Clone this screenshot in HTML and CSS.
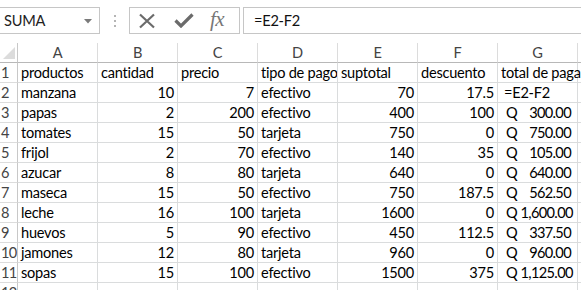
FILE: index.html
```html
<!DOCTYPE html>
<html>
<head>
<meta charset="utf-8">
<link rel="stylesheet" href="styles.css">
</head>
<body>
<div class="toolbar">
  <div class="namebox"><span class="nb-text">SUMA</span>
    <svg class="nb-arrow" width="8" height="5" viewBox="0 0 8 5"><path d="M0 0H8L4 4.5Z" fill="#7a7a7a"/></svg>
  </div>
  <div class="dots">
    <svg width="4" height="14" viewBox="0 0 4 14"><rect x="1" y="1" width="2" height="2" fill="#b5b5b5"/><rect x="1" y="6" width="2" height="2" fill="#b5b5b5"/><rect x="1" y="11" width="2" height="2" fill="#b5b5b5"/></svg>
  </div>
  <div class="fxbox">
    <svg class="ic-x" width="18" height="16" viewBox="0 0 18 16"><path d="M2 1.5L16 14.5M16 1.5L2 14.5" stroke="#6b6b6b" stroke-width="2.2" fill="none"/></svg>
    <svg class="ic-check" width="20" height="15" viewBox="0 0 20 15"><path d="M1.5 7.5L7 13L18.5 1.5" stroke="#6b6b6b" stroke-width="3.2" fill="none"/></svg>
    <span class="fx">fx</span>
  </div>
  <div class="formula">=E2-F2</div>
</div>

<div class="sheet">
  <div class="corner"><svg width="12" height="12" viewBox="0 0 12 12"><path d="M12 0V12H0Z" fill="#dcdcdc"/></svg></div>
  <div class="ch">A</div><div class="ch">B</div><div class="ch">C</div><div class="ch">D</div><div class="ch">E</div><div class="ch">F</div><div class="ch">G</div><div class="ch last"></div>

  <div class="rh">1</div><div class="c">productos</div><div class="c">cantidad</div><div class="c">precio</div><div class="c">tipo de pago</div><div class="c">suptotal</div><div class="c">descuento</div><div class="c over">total de paga</div><div class="c last"></div>

  <div class="rh">2</div><div class="c">manzana</div><div class="c n">10</div><div class="c n">7</div><div class="c">efectivo</div><div class="c n">70</div><div class="c n">17.5</div><div class="c edit">=E2-F2</div><div class="c last"></div>

  <div class="rh">3</div><div class="c">papas</div><div class="c n">2</div><div class="c n">200</div><div class="c">efectivo</div><div class="c n">400</div><div class="c n">100</div><div class="c acc"><span>Q</span><span class="amt">300.00</span></div><div class="c last"></div>

  <div class="rh">4</div><div class="c">tomates</div><div class="c n">15</div><div class="c n">50</div><div class="c">tarjeta</div><div class="c n">750</div><div class="c n">0</div><div class="c acc"><span>Q</span><span class="amt">750.00</span></div><div class="c last"></div>

  <div class="rh">5</div><div class="c">frijol</div><div class="c n">2</div><div class="c n">70</div><div class="c">efectivo</div><div class="c n">140</div><div class="c n">35</div><div class="c acc"><span>Q</span><span class="amt">105.00</span></div><div class="c last"></div>

  <div class="rh">6</div><div class="c">azucar</div><div class="c n">8</div><div class="c n">80</div><div class="c">tarjeta</div><div class="c n">640</div><div class="c n">0</div><div class="c acc"><span>Q</span><span class="amt">640.00</span></div><div class="c last"></div>

  <div class="rh">7</div><div class="c">maseca</div><div class="c n">15</div><div class="c n">50</div><div class="c">efectivo</div><div class="c n">750</div><div class="c n">187.5</div><div class="c acc"><span>Q</span><span class="amt">562.50</span></div><div class="c last"></div>

  <div class="rh">8</div><div class="c">leche</div><div class="c n">16</div><div class="c n">100</div><div class="c">tarjeta</div><div class="c n">1600</div><div class="c n">0</div><div class="c acc"><span>Q</span><span class="amt">1,600.00</span></div><div class="c last"></div>

  <div class="rh">9</div><div class="c">huevos</div><div class="c n">5</div><div class="c n">90</div><div class="c">efectivo</div><div class="c n">450</div><div class="c n">112.5</div><div class="c acc"><span>Q</span><span class="amt">337.50</span></div><div class="c last"></div>

  <div class="rh">10</div><div class="c">jamones</div><div class="c n">12</div><div class="c n">80</div><div class="c">tarjeta</div><div class="c n">960</div><div class="c n">0</div><div class="c acc"><span>Q</span><span class="amt">960.00</span></div><div class="c last"></div>

  <div class="rh">11</div><div class="c">sopas</div><div class="c n">15</div><div class="c n">100</div><div class="c">efectivo</div><div class="c n">1500</div><div class="c n">375</div><div class="c acc"><span>Q</span><span class="amt">1,125.00</span></div><div class="c last"></div>

  <div class="rh">12</div><div class="c"></div><div class="c"></div><div class="c"></div><div class="c"></div><div class="c"></div><div class="c"></div><div class="c"></div><div class="c last"></div>
</div>
</body>
</html>
```

FILE: styles.css
```css
html, body {
  margin: 0;
  padding: 0;
  background: #fff;
  overflow: hidden;
  width: 581px;
  height: 290px;
  font-family: Lato, "Liberation Sans", sans-serif;
  font-size: 14.6px;
  letter-spacing: -0.25px;
  color: #000;
}

.toolbar {
  display: flex;
  align-items: stretch;
  height: 27px;
  margin-top: 7px;
}

.namebox {
  box-sizing: border-box;
  width: 100px;
  border: 1px solid #c6c6c6;
  border-left: none;
  display: flex;
  align-items: center;
  justify-content: space-between;
  padding: 0 7px 0 4px;
}
.nb-text { color: #222; }
.nb-arrow { margin-top: 1px; }

.dots {
  width: 29px;
  display: flex;
  align-items: center;
  justify-content: center;
}

.fxbox {
  box-sizing: border-box;
  width: 111px;
  border: 1px solid #c6c6c6;
  display: flex;
  align-items: center;
  padding-left: 8px;
}
.ic-x { margin-right: 18px; }
.ic-check { margin-right: 16px; }
.fx {
  font-family: "Liberation Serif", serif;
  font-style: italic;
  font-size: 21px;
  color: #777;
  letter-spacing: -0.5px;
  line-height: 1;
  margin-top: -2px;
}

.formula {
  box-sizing: border-box;
  flex: 1;
  margin-left: 3px;
  border: 1px solid #c6c6c6;
  border-right: none;
  display: flex;
  align-items: center;
  padding-left: 10px;
  color: #111;
}

.sheet {
  margin-top: 9px;
  display: grid;
  grid-template-columns: 18px repeat(7, 80px) 60px;
  grid-auto-rows: 20px;
}

.corner, .ch, .rh, .c {
  box-sizing: border-box;
  white-space: nowrap;
  overflow: hidden;
}

.corner {
  border-right: 1px solid #c8c8c8;
  border-bottom: 1px solid #b8b8b8;
  display: flex;
  align-items: flex-end;
  justify-content: flex-end;
  padding: 0 2px 3px 0;
}

.ch {
  border-right: 1px solid #dcdcdc;
  border-bottom: 1px solid #b8b8b8;
  text-align: center;
  color: #444;
  line-height: 19px;
}

.rh {
  border-right: 1px solid #c8c8c8;
  border-bottom: 1px solid #dcdcdc;
  color: #444;
  padding-left: 1px;
  line-height: 19px;
  letter-spacing: -0.6px;
}

.c {
  border-right: 1px solid #dadcdd;
  border-bottom: 1px solid #dadcdd;
  padding: 0 3px;
  line-height: 19px;
}
.c.n { text-align: right; }
.c.over { overflow: visible; position: relative; z-index: 1; }
.c.edit { padding-left: 6px; }
.c.acc {
  display: flex;
  justify-content: space-between;
  gap: 3px;
  padding: 0 6px 0 8px;
}
.amt { letter-spacing: -0.65px; }
.last { border-right: none; }
```
